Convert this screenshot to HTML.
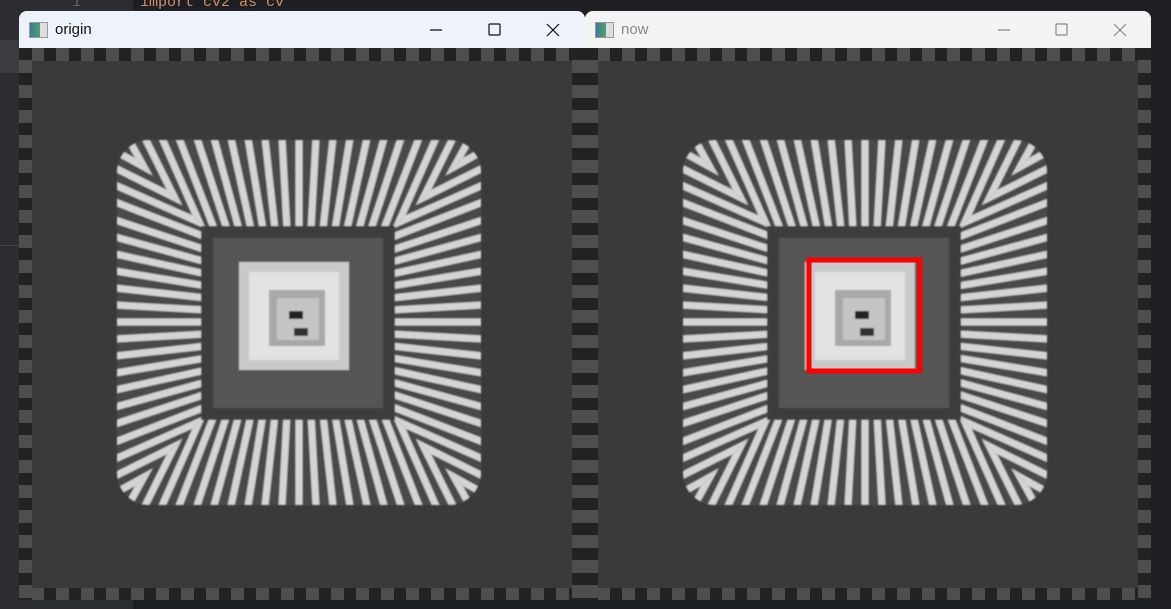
<!DOCTYPE html>
<html><head><style>
body{margin:0;width:1171px;height:609px;overflow:hidden;background:#1e1f22;position:relative;font-family:"Liberation Sans",sans-serif}
.ed{position:absolute;left:0;top:0;width:1171px;height:609px}
.win{position:absolute;top:11px;height:589px;border-radius:8px 8px 0 0;overflow:hidden}
.tb{height:37px;position:relative}
.tb .t{position:absolute;left:36px;top:10px;font-size:15px}
.ic{position:absolute;left:10px;top:11px;width:17px;height:14px;border:1px solid #999;background:linear-gradient(90deg,#3a7a9a,#4fa070 60%,#ddd 60%)}
.btn{position:absolute;top:6px}
</style></head><body>
<svg class="ed" viewBox="0 0 1171 609">
<rect width="1171" height="609" fill="#1e1f22"/>
<rect x="0" y="0" width="133" height="609" fill="#2b2d30"/>
<rect x="0" y="40" width="20" height="33" fill="#3a3c40"/>
<rect x="0" y="245" width="20" height="1" fill="#444"/>
<text x="140" y="6" fill="#cf8e6d" font-family="Liberation Mono" font-size="15">import cv2 as cv</text>
<text x="72" y="6" fill="#666" font-family="Liberation Mono" font-size="15">1</text>
<defs>
<filter id="bl"><feGaussianBlur stdDeviation="0.9"/></filter>
<mask id="ann"><rect x="98" y="92" width="364" height="365" rx="32" fill="#fff"/><rect x="182" y="178" width="194" height="194" fill="#000"/></mask>
<clipPath id="tri"><polygon points="90,84 470,84 280,274"/></clipPath>
<pattern id="bp" width="25" height="13" patternUnits="userSpaceOnUse"><rect width="25" height="13" fill="#4e4e4e"/><rect width="12" height="13" fill="#222"/></pattern>
<pattern id="bpv" width="13" height="25" patternUnits="userSpaceOnUse"><rect width="13" height="25" fill="#4e4e4e"/><rect width="13" height="12" fill="#222"/></pattern>
<g id="side"><g clip-path="url(#tri)">
<line x1="280" y1="400" x2="99" y2="72"/><line x1="280" y1="400" x2="117" y2="72"/><line x1="280" y1="400" x2="135" y2="72"/><line x1="280" y1="400" x2="153" y2="72"/><line x1="280" y1="400" x2="172" y2="72"/><line x1="280" y1="400" x2="190" y2="72"/><line x1="280" y1="400" x2="208" y2="72"/><line x1="280" y1="400" x2="226" y2="72"/><line x1="280" y1="400" x2="244" y2="72"/><line x1="280" y1="400" x2="262" y2="72"/><line x1="280" y1="400" x2="280" y2="72"/><line x1="280" y1="400" x2="298" y2="72"/><line x1="280" y1="400" x2="316" y2="72"/><line x1="280" y1="400" x2="334" y2="72"/><line x1="280" y1="400" x2="352" y2="72"/><line x1="280" y1="400" x2="370" y2="72"/><line x1="280" y1="400" x2="388" y2="72"/><line x1="280" y1="400" x2="407" y2="72"/><line x1="280" y1="400" x2="425" y2="72"/><line x1="280" y1="400" x2="443" y2="72"/><line x1="280" y1="400" x2="461" y2="72"/>
</g></g>
<g id="img">
<rect width="566" height="552" fill="#3a3a3a"/>
<rect x="0" y="0" width="566" height="13" fill="url(#bp)"/>
<rect x="0" y="540" width="566" height="12" fill="url(#bp)"/>
<rect x="0" y="0" width="13" height="552" fill="url(#bpv)"/>
<rect x="553" y="0" width="13" height="552" fill="url(#bpv)"/>
<rect x="13" y="13" width="540" height="527" fill="#3a3a3a"/>
<g filter="url(#bl)">
<g mask="url(#ann)">
<rect x="90" y="85" width="380" height="380" fill="#4a4a4a"/>
<g stroke="#d4d4d4" stroke-width="7">
<use href="#side"/>
<use href="#side" transform="rotate(90 280 274)"/>
<use href="#side" transform="rotate(180 280 274)"/>
<use href="#side" transform="rotate(270 280 274)"/>
</g>
</g>
<rect x="182" y="178" width="194" height="194" fill="#3e3e3e"/>
<rect x="194" y="190" width="170" height="170" fill="#555"/>
<rect x="220" y="214" width="110" height="108" fill="#c9c9c9"/>
<rect x="230" y="224" width="90" height="88" fill="#e2e2e2"/>
<rect x="250" y="242" width="56" height="56" fill="#a8a8a8"/>
<rect x="258" y="250" width="42" height="42" fill="#c4c4c4"/>
<rect x="270" y="263" width="14" height="8" fill="#222"/>
<rect x="275" y="280" width="14" height="8" fill="#333"/>
</g>
</g>
</defs>
</svg>
<div class="win" style="left:19px;width:566px;background:#eef2fa">
<div class="tb" style="background:#eef2fa"><div class="ic"></div><div class="t" style="color:#111">origin</div>
<svg class="btn" style="left:405px" width="160" height="26"><g stroke="#111" stroke-width="1.2" fill="none"><line x1="6" y1="13" x2="18" y2="13"/><rect x="65" y="7" width="11" height="11" rx="1"/><line x1="123" y1="7" x2="135" y2="19"/><line x1="135" y1="7" x2="123" y2="19"/></g></svg></div>
<svg width="566" height="552" style="display:block"><use href="#img"/></svg>
</div>
<div class="win" style="left:585px;width:566px;background:#f3f3f3">
<div class="tb" style="background:#f3f3f3"><div class="ic"></div><div class="t" style="color:#888">now</div>
<svg class="btn" style="left:405px" width="160" height="26"><g stroke="#888" stroke-width="1.2" fill="none"><line x1="8" y1="13" x2="20" y2="13"/><rect x="66" y="7" width="11" height="11" rx="1"/><line x1="124" y1="7" x2="136" y2="19"/><line x1="136" y1="7" x2="124" y2="19"/></g></svg></div>
<svg width="566" height="552" style="display:block"><use href="#img"/><rect x="224" y="212" width="111" height="111" fill="none" stroke="#f00" stroke-width="5"/></svg>
</div>
</body></html>
